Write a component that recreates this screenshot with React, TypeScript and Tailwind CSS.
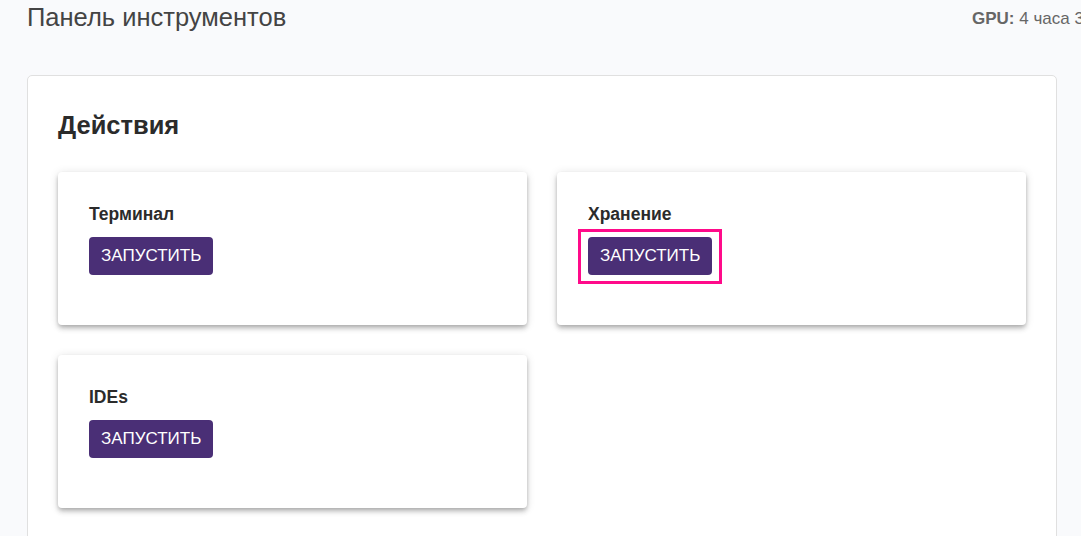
import React from "react";

const tools = [
  { name: "Терминал", highlight: false },
  { name: "Хранение", highlight: true },
  { name: "IDEs", highlight: false },
];

const ToolCard = ({ name, highlight }: { name: string; highlight: boolean }) => (
  <div className="h-[153px] rounded-[4px] bg-white pl-[31px] pt-[32px] shadow-[0_2px_4px_-1px_rgba(0,0,0,0.2),0_4px_5px_0_rgba(0,0,0,0.14),0_1px_10px_0_rgba(0,0,0,0.12)]">
    <div className="text-[17.5px] font-bold leading-[20px] text-[#2b2b2b]">{name}</div>
    <div className="relative mt-[13px] inline-block">
      {highlight && (
        <span className="absolute -left-[10px] -right-[10px] -top-[8px] -bottom-[9px] border-[3px] border-[#ff0a8a]" />
      )}
      <button className="relative h-[38px] rounded-[4px] bg-[#4a2f76] px-[12px] text-[17px] uppercase text-white">
        Запустить
      </button>
    </div>
  </div>
);

export default function App() {
  return (
    <div className="h-[536px] w-[1081px] overflow-hidden bg-[#f9fafc] font-['Liberation_Sans',Arial,sans-serif]">
      <div className="flex items-start">
        <h1 className="ml-[27px] mt-[2px] text-[25.5px] leading-[30px] text-[#444]">
          Панель инструментов
        </h1>
        <div className="ml-auto mt-[6px] w-[109px] shrink-0 whitespace-nowrap text-[17px] text-[#666]">
          <b>GPU:</b> 4 часа 30 мин
        </div>
      </div>
      <div className="mx-[27px] mt-[43px] h-[600px] w-[1030px] rounded-[5px] border border-[#e0e0e0] bg-white px-[30px] pt-[35px]">
        <h2 className="text-[25.5px] font-bold leading-[28px] text-[#2b2b2b]">Действия</h2>
        <div className="mt-[33px] grid grid-cols-2 gap-x-[30px] gap-y-[30px] w-[968px]">
          {tools.map((t, i) => (
            <ToolCard key={i} name={t.name} highlight={t.highlight} />
          ))}
        </div>
      </div>
    </div>
  );
}
